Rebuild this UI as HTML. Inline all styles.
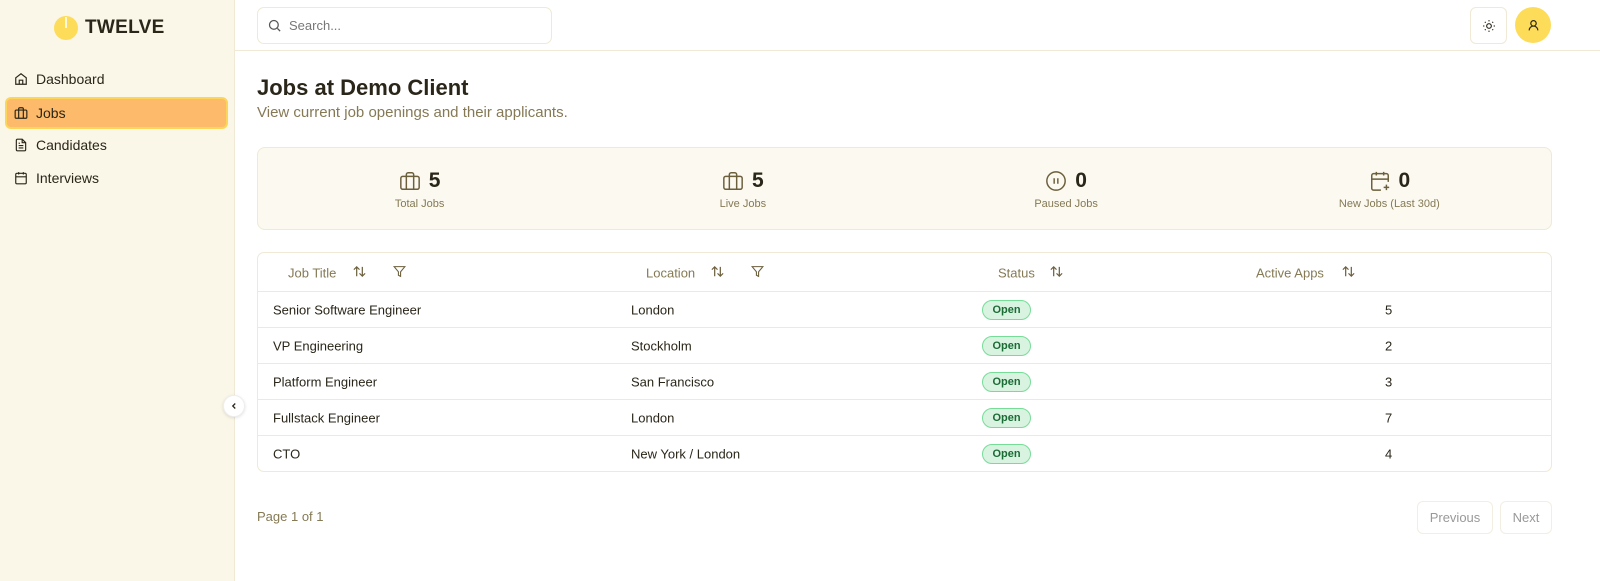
<!DOCTYPE html>
<html><head><meta charset="utf-8"><style>
*{box-sizing:border-box;margin:0;padding:0}
body{width:1600px;height:581px;overflow:hidden;font-family:"Liberation Sans",sans-serif;background:#fff;color:#2a2619;position:relative}
.side{position:absolute;left:0;top:0;width:235px;height:581px;background:#faf6e8;border-right:1px solid #efe9d6}
.logo{position:absolute;left:54px;top:16px;display:flex;align-items:center;gap:7px;font-weight:bold;font-size:19px;letter-spacing:.3px}
.nav{position:absolute;left:5px;width:223px;height:32px;display:flex;align-items:center;padding-left:9px;gap:8px;font-size:14px;color:#2a2619}
.nav.act{background:#fdba6a;border:2px solid #fbd65a;border-radius:6px;padding-left:7px}
.top{position:absolute;left:235px;top:0;right:0;height:51px;border-bottom:1px solid #efe9d6}
.search{position:absolute;left:22px;top:7px;width:295px;height:37px;border:1px solid #efe9d6;border-radius:7px;display:flex;align-items:center;padding-left:9px;gap:7px;font-size:13px;color:#777}
.btn{position:absolute;top:7px;width:37px;height:37px;border:1px solid #efe9d6;border-radius:6px;display:flex;align-items:center;justify-content:center}
.av{position:absolute;top:7px;left:1515px;width:36px;height:36px;border-radius:50%;background:#fddc5a;display:flex;align-items:center;justify-content:center}
h1{position:absolute;left:257px;top:75px;font-size:22px;font-weight:bold}
.sub{position:absolute;left:257px;top:104px;font-size:15px;color:#857a55}
.stats{position:absolute;left:257px;top:147px;width:1295px;height:83px;background:#fbf9f0;border:1px solid #efe9d6;border-radius:8px;display:flex}
.st{flex:1;display:flex;flex-direction:column;align-items:center;padding-top:21px}
.st .v{display:flex;align-items:center;gap:8px;font-size:21px;font-weight:bold;height:24px}
.st .l{font-size:11px;color:#857a55;margin-top:5px}
.tbl{position:absolute;left:257px;top:252px;width:1295px;height:220px;border:1px solid #efe9d6;border-radius:7px}
.row{position:absolute;left:0;right:0;height:36px;border-top:1px solid #efe9d6;font-size:13px}
.row span,.hd span{position:absolute;top:50%;transform:translateY(-50%);line-height:0}
.row span{line-height:normal}
.hd{position:absolute;left:0;right:0;top:0;height:39px;font-size:13px;color:#857a55}
.hd span{line-height:normal}
.badge{background:#d9f3e1;border:1px solid #77dc98;color:#1b6b35;font-weight:bold;font-size:11px;border-radius:10px;width:49px;height:20px;display:flex;align-items:center;justify-content:center}
.pg{position:absolute;top:501px;height:33px;border:1px solid #f2eee2;border-radius:6px;font-size:13px;color:#999;display:flex;align-items:center;justify-content:center}
</style></head><body>
<svg width="0" height="0" style="position:absolute"><defs><symbol id="srt" viewBox="0 0 16 16"><path d="M5 13V3M2 6l3-3 3 3M11 3v10M8 10l3 3 3-3" fill="none" stroke="#6b5f3c" stroke-width="1.3"/></symbol></defs></svg>
<div class="side">
 <div class="logo"><svg width="24" height="24" viewBox="0 0 24 24"><circle cx="12" cy="12" r="12" fill="#fddc5a"/><line x1="12" y1="1" x2="12" y2="12" stroke="#fff" stroke-width="1.6"/></svg>TWELVE</div>
 <div class="nav" style="top:63px"><svg width="14" height="14" viewBox="0 0 24 24" fill="none" stroke="#2a2619" stroke-width="2"><path d="M3 10l9-7 9 7v11H3z"/><path d="M9 21v-7h6v7"/></svg>Dashboard</div>
 <div class="nav act" style="top:97px"><svg width="14" height="14" viewBox="0 0 24 24" fill="none" stroke="#2a2619" stroke-width="2"><rect x="2" y="7" width="20" height="14" rx="2"/><path d="M16 21V5a2 2 0 0 0-2-2h-4a2 2 0 0 0-2 2v16"/></svg>Jobs</div>
 <div class="nav" style="top:129px"><svg width="14" height="14" viewBox="0 0 24 24" fill="none" stroke="#2a2619" stroke-width="2"><path d="M14 2H6a2 2 0 0 0-2 2v16a2 2 0 0 0 2 2h12a2 2 0 0 0 2-2V8z"/><path d="M14 2v6h6M8 13h8M8 17h8M8 9h2"/></svg>Candidates</div>
 <div class="nav" style="top:162px"><svg width="14" height="14" viewBox="0 0 24 24" fill="none" stroke="#2a2619" stroke-width="2"><rect x="3" y="4" width="18" height="18" rx="2"/><path d="M16 2v4M8 2v4M3 10h18M8 14h.01M12 14h.01M16 14h.01M8 18h.01M12 18h.01M16 18h.01"/></svg>Interviews</div>
</div>
<div style="position:absolute;left:223px;top:395px;width:22px;height:22px;border-radius:50%;background:#fff;border:1px solid #eee;box-shadow:0 1px 3px rgba(0,0,0,.12);display:flex;align-items:center;justify-content:center"><svg width="10" height="10" viewBox="0 0 24 24" fill="none" stroke="#2a2619" stroke-width="3"><path d="M15 18l-6-6 6-6"/></svg></div>
<div class="top">
 <div class="search"><svg width="15" height="15" viewBox="0 0 24 24" fill="none" stroke="#555" stroke-width="2"><circle cx="11" cy="11" r="7"/><path d="M21 21l-4.3-4.3"/></svg>Search...</div>
 <div class="btn" style="left:1235px"><svg width="14" height="14" viewBox="0 0 24 24" fill="none" stroke="#2a2619" stroke-width="2"><circle cx="12" cy="12" r="4"/><path d="M12 2v2M12 20v2M4.9 4.9l1.4 1.4M17.7 17.7l1.4 1.4M2 12h2M20 12h2M4.9 19.1l1.4-1.4M17.7 6.3l1.4-1.4"/></svg></div>
</div>
<div class="av"><svg width="13" height="13" viewBox="0 0 24 24" fill="none" stroke="#2a2619" stroke-width="2.2"><circle cx="12" cy="8" r="5"/><path d="M20 21a8 8 0 0 0-16 0"/></svg></div>
<h1>Jobs at Demo Client</h1>
<div class="sub">View current job openings and their applicants.</div>
<div class="stats">
 <div class="st"><div class="v"><svg width="22" height="22" viewBox="0 0 24 24" fill="none" stroke="#6b5f3c" stroke-width="1.6"><rect x="2" y="7" width="20" height="14" rx="2"/><path d="M16 21V5a2 2 0 0 0-2-2h-4a2 2 0 0 0-2 2v16"/></svg>5</div><div class="l">Total Jobs</div></div>
 <div class="st"><div class="v"><svg width="22" height="22" viewBox="0 0 24 24" fill="none" stroke="#6b5f3c" stroke-width="1.6"><rect x="2" y="7" width="20" height="14" rx="2"/><path d="M16 21V5a2 2 0 0 0-2-2h-4a2 2 0 0 0-2 2v16"/></svg>5</div><div class="l">Live Jobs</div></div>
 <div class="st"><div class="v"><svg width="22" height="22" viewBox="0 0 24 24" fill="none" stroke="#6b5f3c" stroke-width="1.6"><circle cx="12" cy="12" r="10"/><path d="M10 15V9M14 15V9"/></svg>0</div><div class="l">Paused Jobs</div></div>
 <div class="st"><div class="v"><svg width="22" height="22" viewBox="0 0 24 24" fill="none" stroke="#6b5f3c" stroke-width="1.6"><path d="M21 13V6a2 2 0 0 0-2-2H5a2 2 0 0 0-2 2v14a2 2 0 0 0 2 2h8M16 2v4M8 2v4M3 10h18M19 16v6M16 19h6"/></svg>0</div><div class="l">New Jobs (Last 30d)</div></div>
</div>
<div class="tbl">
 <div class="hd">
  <span style="left:30px">Job Title</span><span style="left:94px"><svg width="15" height="15"><use href="#srt"/></svg></span>
  <span style="left:135px"><svg width="13" height="13" viewBox="0 0 24 24" fill="none" stroke="#6b5f3c" stroke-width="2"><path d="M22 3H2l8 9.5V19l4 2v-8.5z"/></svg></span>
  <span style="left:388px">Location</span><span style="left:452px"><svg width="15" height="15"><use href="#srt"/></svg></span>
  <span style="left:493px"><svg width="13" height="13" viewBox="0 0 24 24" fill="none" stroke="#6b5f3c" stroke-width="2"><path d="M22 3H2l8 9.5V19l4 2v-8.5z"/></svg></span>
  <span style="left:740px">Status</span><span style="left:791px"><svg width="15" height="15"><use href="#srt"/></svg></span>
  <span style="left:998px">Active Apps</span><span style="left:1083px"><svg width="15" height="15"><use href="#srt"/></svg></span>
 </div>
 <div class="row" style="top:38px"><span style="left:15px">Senior Software Engineer</span><span style="left:373px">London</span><span style="left:724px" class="badge">Open</span><span style="left:1127px">5</span></div>
 <div class="row" style="top:74px"><span style="left:15px">VP Engineering</span><span style="left:373px">Stockholm</span><span style="left:724px" class="badge">Open</span><span style="left:1127px">2</span></div>
 <div class="row" style="top:110px"><span style="left:15px">Platform Engineer</span><span style="left:373px">San Francisco</span><span style="left:724px" class="badge">Open</span><span style="left:1127px">3</span></div>
 <div class="row" style="top:146px"><span style="left:15px">Fullstack Engineer</span><span style="left:373px">London</span><span style="left:724px" class="badge">Open</span><span style="left:1127px">7</span></div>
 <div class="row" style="top:182px"><span style="left:15px">CTO</span><span style="left:373px">New York / London</span><span style="left:724px" class="badge">Open</span><span style="left:1127px">4</span></div>
</div>
<div style="position:absolute;left:257px;top:509px;font-size:13px;color:#857a55">Page 1 of 1</div>
<div class="pg" style="left:1417px;width:76px">Previous</div>
<div class="pg" style="left:1500px;width:52px">Next</div>
</body></html>
